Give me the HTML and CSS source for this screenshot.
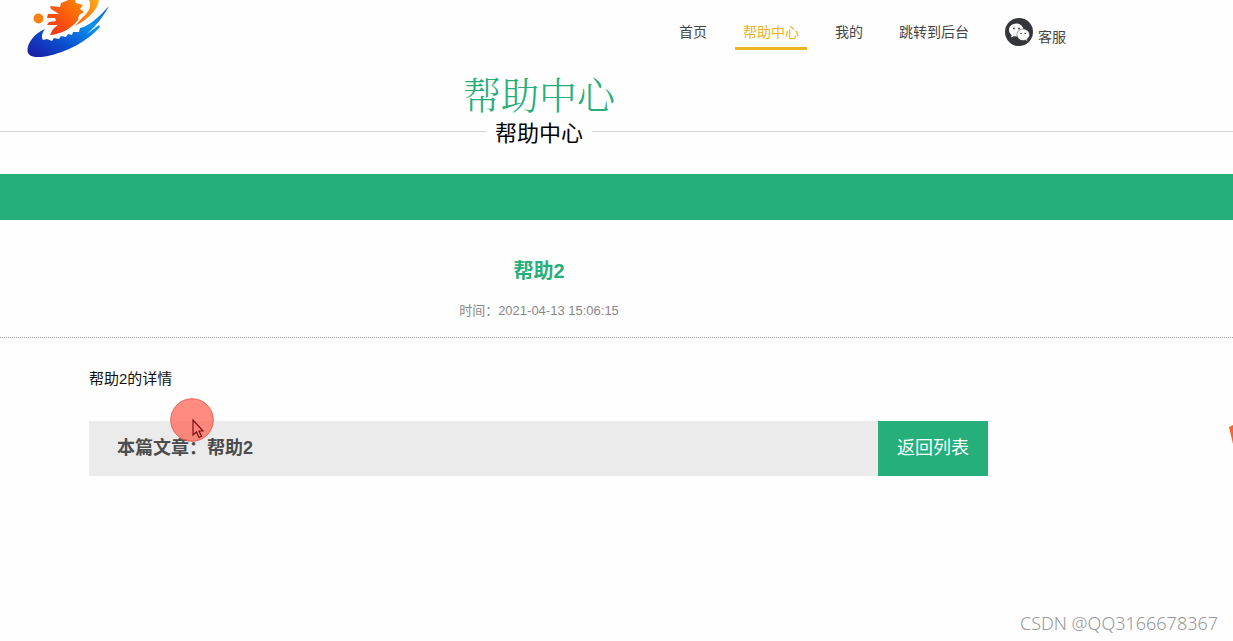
FILE: index.html
```html
<!DOCTYPE html>
<html lang="zh-CN">
<head>
<meta charset="utf-8">
<title>帮助中心</title>
<link rel="stylesheet" href="styles.css">
</head>
<body>
<header class="header">
  <a class="logo" href="#" aria-label="首页">
    <svg width="120" height="64" viewBox="0 0 120 64" aria-hidden="true">
      <defs>
        <linearGradient id="wave" x1="0" y1="1" x2="1" y2="0">
          <stop offset="0" stop-color="#1c18a0"/><stop offset=".35" stop-color="#0b4fd0"/><stop offset=".7" stop-color="#0b93ec"/><stop offset="1" stop-color="#1266c8"/>
        </linearGradient>
        <linearGradient id="flame" x1="0" y1="1" x2="1" y2="0">
          <stop offset="0" stop-color="#f5301c"/><stop offset=".5" stop-color="#fb5a0c"/><stop offset="1" stop-color="#fb8a08"/>
        </linearGradient>
        <linearGradient id="ring" x1="0" y1="1" x2="1" y2="0">
          <stop offset="0" stop-color="#fb5c0c"/><stop offset="1" stop-color="#f9ae1c"/>
        </linearGradient>
      </defs>
      <path fill="url(#wave)" d="M45 29C35 33 27 43 27.500 51C28 57 36 58 45 56.500C60 54 84 45 100 27L99 25L87 34C97 25 105 14 109 6C100 16 92 23 84 27L80 28L79 32L73 32L72 35L68 34L66 37L61 36L59 39L54 38L52 41L47 39L43 40C41 37 42 33 45 29Z"/>
      <path fill="url(#flame)" d="M61 3L66 1L68 0H75L76 3L83 5L80 9L84 12L79 15L78 20C72 28 62 34 50 35L53 29L58 25L47 25L49 22L56 21L55 18L47 18L48 14L59 14L51 9L50 6L60 7Z"/>
      <path fill="url(#ring)" d="M89 0H99C98 10 87 20 75 26L82 18C89 12 92 6 89 0Z"/>
      <circle cx="38.500" cy="18.500" r="5" fill="#fb820c"/>
    </svg>
  </a>
  <nav class="nav">
    <a class="nav-link" href="#">首页</a>
    <a class="nav-link active" href="#">帮助中心</a>
    <a class="nav-link" href="#">我的</a>
    <a class="nav-link" href="#">跳转到后台</a>
    <a class="service" href="#">
      <svg width="28" height="28" viewBox="0 0 28 28" aria-hidden="true">
        <circle cx="14" cy="14" r="14" fill="#35363a"/>
        <path fill="#fff" d="M11.500 5.500C7 5.500 4 8.500 4 12C4 14 5 15.800 6.700 17L6 19.500L8.700 18.200L12.500 18.500C12 14.500 14 11.500 18.500 11.200C17.800 8 15 5.500 11.500 5.500Z"/>
        <path fill="#fff" stroke="#35363a" stroke-width=".5" d="M18 11C14.500 11 12 13.500 12 16.800C12 20 14.600 22.500 18 22.500L20.300 22L22.500 23.500L22 21.200C23.700 20 24.500 18.400 24.500 16.800C24.500 13.500 21.500 11 18 11Z"/>
        <g fill="#35363a"><circle cx="9" cy="10.500" r=".9"/><circle cx="14" cy="10.500" r=".9"/><circle cx="16" cy="15.500" r=".8"/><circle cx="20.200" cy="15.500" r=".8"/></g>
      </svg>
      <span class="service-text">客服</span>
    </a>
  </nav>
</header>
<main>
  <div class="heading">
    <h1 class="heading-title">帮助中心</h1>
    <div class="heading-rule"><span class="heading-sub">帮助中心</span></div>
  </div>
  <div class="band"></div>
  <article>
    <header class="article-head">
      <h2 class="article-title">帮助2</h2>
      <p class="article-time">时间：2021-04-13 15:06:15</p>
    </header>
    <div class="article-body">
      <p class="article-text">帮助2的详情</p>
      <div class="article-bar">
        <strong class="current">本篇文章：帮助2</strong>
        <a class="back" href="#">返回列表</a>
      </div>
    </div>
  </article>
</main>
<svg class="pointer" width="44" height="44" viewBox="0 0 44 44" aria-hidden="true">
  <circle cx="22" cy="22" r="21.300" fill="#ff6759" fill-opacity=".76" stroke="#ee4a3d" stroke-width=".8"/>
  <path d="M23 22V37L26.500 34L29 39.500L31.500 38.300L29 33H33Z" fill="#ff8177" stroke="#7c1010" stroke-width="1.200"/>
</svg>
<svg class="edge-mark" width="4" height="20" viewBox="0 0 4 20" aria-hidden="true"><path fill="#f4642b" d="M0 2L4 0V19Z"/></svg>
<div class="watermark">CSDN @QQ3166678367</div>
</body>
</html>
```
FILE: styles.css
```css
* { box-sizing: border-box; }
body {
  margin: 0;
  min-height: 100vh;
  position: relative;
  overflow-x: hidden;
  background: #fefefe;
  color: #111;
  font-family: "Liberation Sans", "Noto Sans CJK SC", sans-serif;
  font-size: 14px;
}
h1, h2, p { margin: 0; }
a { color: inherit; text-decoration: none; }
.header {
  display: flex;
  justify-content: space-between;
  height: 64px;
  padding-right: 167px;
}
.logo svg { display: block; }
.nav {
  display: flex;
  align-items: flex-start;
  gap: 20px;
  padding-top: 16px;
  color: #444;
}
.nav-link {
  padding: 0 8px;
  height: 34px;
  line-height: 33px;
}
.active {
  color: #e8b325;
  border-bottom: 3px solid #e8b325;
}
.service {
  display: flex;
  gap: 5px;
  margin-left: 8px;
  padding-top: 2px;
}
.service-text {
  padding-top: 8px;
  line-height: 22px;
}
.heading, .article-head { text-align: center; }
.heading { padding: 5px 0 28px; }
.heading-title {
  padding-right: 155px;
  color: #25ae79;
  font-family: "Noto Serif CJK SC", "Noto Sans CJK SC", serif;
  font-size: 38px;
  font-weight: 300;
  line-height: 48px;
}
.heading-rule {
  display: flex;
  align-items: center;
  gap: 9px;
  line-height: 29px;
}
.heading-rule::before, .heading-rule::after {
  content: "";
  flex: 1;
  border-top: 1px solid #d6d6d6;
}
.heading-rule::after { flex: 1 1 155px; }
.heading-sub { padding-top: 2px; margin-bottom: -2px; font-size: 22px; color: #000; }
.band { height: 46px; background: #26af7a; }
.article-head {
  padding: 36px 155px 16px 0;
  border-bottom: 1px dotted #999;
}
.article-title {
  color: #26af7a;
  font-size: 20px;
  line-height: 30px;
}
.article-time {
  margin-top: 15px;
  color: #888;
  font-size: 13px;
  line-height: 20px;
}
.article-body { padding: 30px 245px 0 89px; }
.article-text { font-size: 15px; line-height: 22px; }
.article-bar {
  display: flex;
  justify-content: space-between;
  margin-top: 31px;
  background: #ebebeb;
  line-height: 55px;
}
.current {
  padding-left: 28px;
  color: #4c4c4c;
  font-size: 18px;
}
.back {
  width: 110px;
  background: #26af7a;
  color: #fff;
  font-size: 18px;
  text-align: center;
}
.pointer { position: absolute; left: 170px; top: 398px; }
.edge-mark { position: absolute; right: 0; top: 425px; }
.watermark {
  position: absolute;
  right: 15px;
  bottom: 8px;
  color: #999;
  font-family: "Noto Sans", "Liberation Sans", sans-serif;
  font-size: 18px;
  font-weight: 300;
  line-height: 20px;
}
```
